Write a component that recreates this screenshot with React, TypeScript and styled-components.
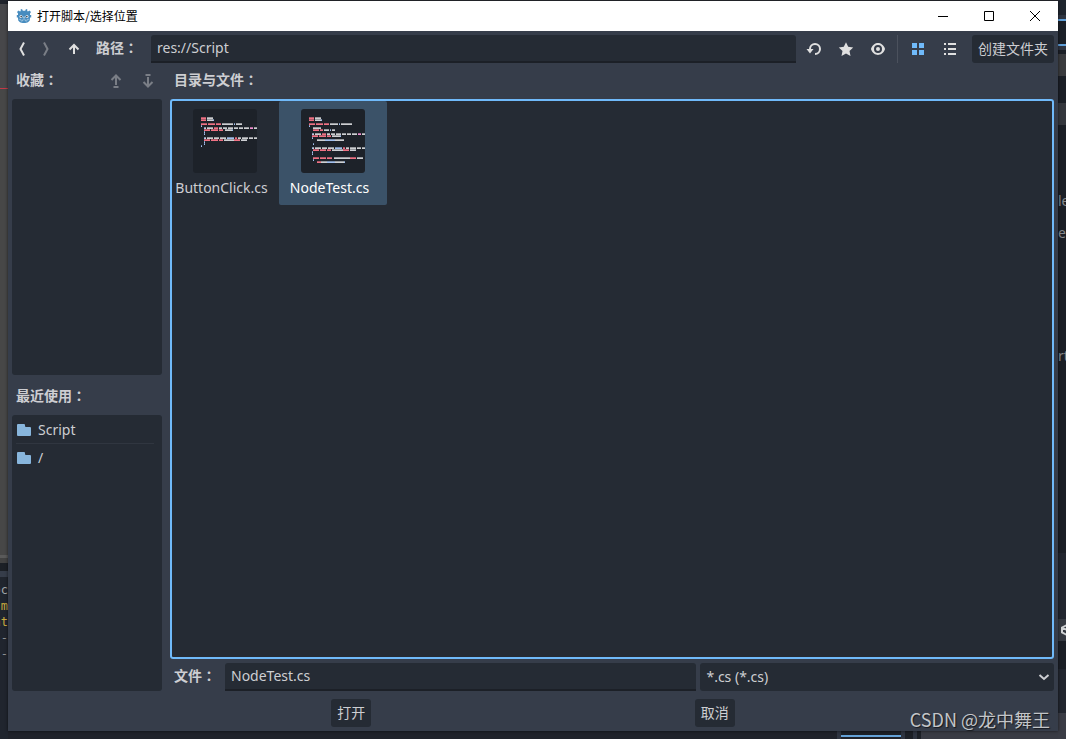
import React, { useState } from 'react';
import styled, { createGlobalStyle, css } from 'styled-components';

const color = {
  base: '#363d4a',
  sunken: '#252b34',
  edge: '#1c2027',
  accent: '#70bafa',
  text: '#cdced2',
  icon: '#e0e0e0',
  folder: '#88b6dd',
  selected: '#3b5268',
};

const GlobalStyle = createGlobalStyle`
  * { box-sizing: border-box; }
  body {
    margin: 0;
    background: #1f232b;
    color: ${color.text};
    font: 14px/20px 'Noto Sans', 'Noto Sans CJK SC', sans-serif;
  }
  button, input, select { font: inherit; color: inherit; }
`;

/* ---------- editor behind the dialog ---------- */

const Desktop = styled.div`
  display: grid;
  grid-template-columns: 8px minmax(0, 1fr) 8px;
  grid-template-rows: 1px minmax(0, 1fr) 8px;
  height: 100vh;
  min-height: 480px;
  overflow: hidden;
`;

const EditorSide = styled.div`
  grid-row: 1 / 4;
  display: flex;
  flex-direction: column;
  overflow: hidden;
`;

const Strip = styled.div<{ $h?: number; $bg: string }>`
  flex: ${(p) => (p.$h ? `0 0 ${p.$h}px` : '1 1 0')};
  background: ${(p) => p.$bg};
  overflow: hidden;
`;

const Console = styled(Strip)`
  display: flex;
  flex-direction: column;
  align-items: flex-end;
  padding-top: 5px;
  font: 12px/16px 'DejaVu Sans Mono', monospace;
`;

const ConsoleLine = styled.span<{ $color: string }>`
  color: ${(p) => p.$color};
  white-space: nowrap;
`;

const SideText = styled(Strip)`
  color: #85888c;
  line-height: 20px;
  display: flex;
  justify-content: flex-start;
`;

const EditorTop = styled.div`
  background: #2a2d33;
`;

const EditorBottom = styled.div`
  grid-column: 2;
  grid-row: 3;
  display: flex;
  background: #1f222a;
  justify-content: flex-end;
`;

const BottomBlock = styled.div<{ $w: number; $bg: string }>`
  width: ${(p) => p.$w}px;
  background: ${(p) => p.$bg};
`;

const BottomTab = styled(BottomBlock)`
  height: 6px;
  border-bottom: 2px solid #64a2d8;
`;

/* ---------- dialog ---------- */

const Dialog = styled.section`
  grid-column: 2;
  grid-row: 2;
  position: relative;
  display: flex;
  flex-direction: column;
  background: ${color.base};
  box-shadow: 0 0 3px rgba(0, 0, 0, 0.6);
`;

const TitleBar = styled.header`
  flex: 0 0 30px;
  display: flex;
  align-items: center;
  padding-left: 8px;
  background: #fff;
  color: #000;
`;

const Title = styled.h1`
  flex: 1;
  margin: 0 0 0 5px;
  font: 400 12px/16px 'Noto Sans CJK SC', sans-serif;
`;

const WindowButton = styled.button`
  width: 46px;
  height: 30px;
  padding: 0;
  border: 0;
  background: none;
  display: flex;
  align-items: center;
  justify-content: center;
`;

const Body = styled.form`
  flex: 1;
  min-height: 0;
  display: flex;
  flex-direction: column;
  gap: 4px;
  padding: 4px;
`;

const Toolbar = styled.div`
  flex: 0 0 28px;
  display: flex;
  align-items: center;
  gap: 4px;
`;

const IconButton = styled.button<{ $w?: number }>`
  flex: none;
  width: ${(p) => p.$w ?? 28}px;
  height: 28px;
  padding: 0;
  border: 0;
  border-radius: 3px;
  background: none;
  color: ${color.icon};
  display: flex;
  align-items: center;
  justify-content: center;
  &:disabled { opacity: 0.4; }
  &[aria-pressed='true'] { color: ${color.accent}; }
`;

const Divider = styled.span`
  width: 1px;
  height: 28px;
  margin: 0 2px 0 1px;
  background: #4b515d;
`;

const labelText = css`
  font-weight: 700;
  white-space: nowrap;
`;

const FieldLabel = styled.label`
  ${labelText}
  flex: 0 0 51px;
  padding: 0 0 4px 4px;
`;

const PathLabel = styled(FieldLabel)`
  flex-basis: 55px;
`;

const Colon = styled.span`
  font-family: 'Noto Sans CJK TC', sans-serif;
`;

const TextInput = styled.input`
  flex: 4 1 0;
  min-width: 0;
  height: 28px;
  padding: 0 6px 2px;
  border: 0;
  border-bottom: 2px solid ${color.edge};
  border-radius: 3px 3px 0 0;
  outline: 0;
  background: ${color.sunken};
`;

const PushButton = styled.button`
  flex: none;
  height: 28px;
  padding: 0 6px;
  border: 0;
  border-radius: 3px;
  background: ${color.sunken};
  white-space: nowrap;
`;

const NewFolderButton = styled(PushButton)`
  margin-left: 4px;
`;

const Columns = styled.div`
  flex: 1;
  min-height: 0;
  display: flex;
  gap: 8px;
`;

const Sidebar = styled.aside`
  flex: 0 0 150px;
  display: flex;
  flex-direction: column;
  gap: 4px;
`;

const Main = styled.main`
  flex: 1;
  min-width: 0;
  display: flex;
  flex-direction: column;
  gap: 4px;
`;

const SectionTitle = styled.h2`
  ${labelText}
  flex: 1;
  margin: 0;
  padding: 0 0 4px 4px;
  font-size: 14px;
  line-height: 20px;
`;

const SectionHead = styled.div<{ $tall?: boolean }>`
  flex: 0 0 ${(p) => (p.$tall ? 32 : 28)}px;
  display: flex;
  align-items: center;
  gap: 4px;
  ${SectionTitle} { padding-bottom: ${(p) => (p.$tall ? 0 : 4)}px; }
`;

const List = styled.ul`
  flex: 1 1 0;
  min-height: 0;
  margin: 0;
  padding: 1px 8px 0 4px;
  border-radius: 3px;
  background: ${color.sunken};
  list-style: none;
  overflow: auto;
`;

const RecentItem = styled.li`
  &:not(:last-child) { border-bottom: 1px solid #303640; }
`;

const RecentButton = styled.button`
  display: flex;
  align-items: center;
  gap: 6px;
  width: 100%;
  height: 27px;
  padding: 0;
  border: 0;
  background: none;
  text-align: left;
`;

const FileGrid = styled.div`
  flex: 1;
  min-height: 0;
  display: flex;
  flex-wrap: wrap;
  align-content: flex-start;
  padding: 2px 1px;
  border-radius: 3px;
  background: ${color.sunken};
  box-shadow: inset 0 0 0 2px ${color.accent};
`;

const FileItem = styled.button`
  width: 108px;
  height: 104px;
  padding: 8px 0 0;
  border: 0;
  border-radius: 2px;
  background: none;
  display: flex;
  flex-direction: column;
  align-items: center;
  gap: 5px;
  &[aria-pressed='true'] { background: ${color.selected}; color: #fff; }
`;

const FileName = styled.span`
  width: 100px;
  margin-right: 7px;
  text-align: center;
`;

const SelectWrap = styled.div`
  flex: 3 1 9px;
  min-width: 0;
  display: grid;
  align-items: center;
  > * { grid-area: 1 / 1; }
  > svg { justify-self: end; margin-right: 2px; pointer-events: none; }
`;

const FilterSelect = styled.select`
  appearance: none;
  width: 100%;
  height: 28px;
  padding: 0 24px 0 6px;
  border: 0;
  border-radius: 3px;
  background: ${color.sunken};
`;

const Actions = styled.footer`
  flex: 0 0 28px;
  margin-top: 4px;
  display: flex;
  justify-content: space-evenly;
  gap: 4px;
`;

const Watermark = styled.span`
  position: absolute;
  right: 8px;
  bottom: 0;
  font: 400 18px/24px 'Noto Sans CJK SC', sans-serif;
  color: #c3c5c8;
  text-shadow: 1px 1px 1px rgba(0, 0, 0, 0.6);
  pointer-events: none;
`;

/* ---------- icons ---------- */

const Icon = ({ children }: { children: React.ReactNode }) => (
  <svg width="16" height="16" viewBox="0 0 16 16" fill="currentColor" aria-hidden="true">
    {children}
  </svg>
);

const line = { fill: 'none', stroke: 'currentColor', strokeWidth: 2 } as const;

const GodotLogo = () => (
  <svg width="16" height="16" viewBox="0 0 16 16" aria-hidden="true">
    <path
      fill="#478cbf"
      d="M6 1 4.600 1.400 4.800 3 4 3.500 2.600 2.400 1 4l1 1.600V7H.8v2.500H2V11c0 2.500 2.500 4 6 4s6-1.500 6-4V9.500h1.200V7H14V5.600L15 4l-1.600-1.600L12 3.500 11.200 3l.2-1.600L10 1l-.8 1.700H6.800z"
    />
    <circle cx="5" cy="8.500" r="1.500" fill="#e6eff6" />
    <circle cx="11" cy="8.500" r="1.500" fill="#e6eff6" />
    <circle cx="5.200" cy="8.600" r=".8" fill="#414042" />
    <circle cx="10.800" cy="8.600" r=".8" fill="#414042" />
    <path stroke="#e6eff6" strokeWidth="1" d="M8 8.500v2" />
    <path stroke="#a9cbe4" strokeWidth=".7" fill="none" d="M2.500 11.200 5 11.500V13h1.500v-1.200h3V13H11v-1.500l2.500-.3" />
  </svg>
);

const Folder = () => (
  <svg width="16" height="16" viewBox="0 0 16 16" fill={color.folder} aria-hidden="true">
    <path d="M1 3a1 1 0 0 1 1-1h6a1 1 0 0 1 1 1v1a1 1 0 0 0 1 1h4a1 1 0 0 1 1 1v7a1 1 0 0 1-1 1H2a1 1 0 0 1-1-1z" />
  </svg>
);

/* ---------- script thumbnails ---------- */

type Run = [x: number, end: number, kind: 'r' | 'w' | 'b' | 'p'];
type CodeLine = [y: number, runs: Run[]];

const ink = { r: '#f07284', w: '#cdcfd2', b: '#a3c0ee', p: '#f08fd0' };

const using: CodeLine[] = [
  [8, [[8, 13, 'r'], [14, 20, 'w']]],
  [10, [[8, 13, 'r'], [14, 20, 'w'], [20, 21, 'b']]],
];
const readySignature: Run[] = [
  [11, 12, 'b'], [12, 13, 'w'], [14, 20, 'w'], [21, 25, 'r'], [26, 29, 'w'], [30, 34, 'w'], [35, 40, 'w'],
  [41, 45, 'w'], [46, 50, 'w'], [51, 56, 'w'], [57, 60, 'p'], [61, 64, 'w'],
];
const processSignature: Run[] = [
  [11, 12, 'b'], [12, 13, 'w'], [14, 20, 'w'], [21, 26, 'w'], [27, 33, 'w'], [34, 41, 'b'], [42, 44, 'r'],
  [45, 48, 'w'], [49, 55, 'w'], [56, 60, 'w'], [61, 64, 'w'],
];

const buttonClickCode: CodeLine[] = [
  ...using,
  [14, [[8, 14, 'r'], [15, 22, 'r'], [23, 28, 'r'], [29, 40, 'w'], [41, 42, 'b'], [43, 49, 'w']]],
  [16, [[8, 9, 'b']]],
  [18, readySignature],
  [20, [[11, 17, 'r'], [18, 25, 'r'], [26, 30, 'r'], [32, 39, 'w'], [39, 40, 'b']]],
  [22, [[11, 12, 'b']]],
  [24, [[11, 12, 'b']]],
  [28, processSignature],
  [30, [[11, 17, 'r'], [18, 25, 'r'], [26, 30, 'r'], [31, 41, 'w'], [41, 47, 'r'], [48, 54, 'w']]],
  [32, [[11, 12, 'b']]],
  [34, [[11, 12, 'b']]],
  [36, [[8, 9, 'b']]],
];

const nodeTestCode: CodeLine[] = [
  ...using,
  [14, [[8, 14, 'r'], [15, 22, 'r'], [23, 28, 'r'], [29, 37, 'w'], [38, 39, 'b'], [40, 51, 'w']]],
  [16, [[8, 9, 'b']]],
  [18, [[12, 20, 'w']]],
  [20, [[12, 18, 'r'], [19, 22, 'r'], [23, 28, 'w'], [29, 30, 'b'], [31, 34, 'w']]],
  [24, readySignature],
  [26, [[11, 17, 'r'], [18, 25, 'r'], [26, 30, 'r'], [31, 39, 'w'], [39, 40, 'b']]],
  [28, [[11, 12, 'b']]],
  [30, [[16, 24, 'w'], [24, 34, 'b'], [34, 43, 'w']]],
  [34, [[12, 13, 'b']]],
  [38, processSignature],
  [40, [[12, 18, 'r'], [19, 25, 'r'], [26, 30, 'r'], [31, 42, 'w'], [42, 48, 'r'], [49, 55, 'w']]],
  [42, [[11, 12, 'b']]],
  [44, [[11, 12, 'b']]],
  [48, [[12, 18, 'r'], [19, 25, 'r'], [26, 31, 'r'], [33, 49, 'w'], [49, 55, 'r'], [56, 62, 'w']]],
  [50, [[12, 13, 'b']]],
  [52, [[16, 20, 'r'], [20, 26, 'w'], [26, 34, 'b'], [34, 43, 'w'], [43, 44, 'b']]],
];

const Thumbnail = ({ code }: { code: CodeLine[] }) => (
  <svg width="64" height="64" viewBox="0 0 64 64" shapeRendering="crispEdges" aria-hidden="true">
    <rect width="64" height="64" rx="3" fill="#1d2229" shapeRendering="auto" />
    {code.map(([y, runs]) =>
      runs.map(([x, end, kind]) => (
        <g key={`${x}-${y}`} fill={ink[kind]}>
          <rect x={x} y={y} width={end - x} height="1" opacity="0.7" />
          <rect x={x} y={y + 1} width={end - x} height="1" />
        </g>
      )),
    )}
  </svg>
);

const files = [
  { name: 'ButtonClick.cs', code: buttonClickCode },
  { name: 'NodeTest.cs', code: nodeTestCode },
];

const recent = ['Script', '/'];

export default function App() {
  const [path, setPath] = useState('res://Script');
  const [file, setFile] = useState('NodeTest.cs');
  const [view, setView] = useState<'grid' | 'list'>('grid');

  return (
    <>
      <GlobalStyle />
      <Desktop>
        <EditorSide aria-hidden="true">
          <Strip $h={4} $bg="#20242c" />
          <Strip $h={84} $bg="#47474a" />
          <Strip $h={1} $bg="#c23a48" />
          <Strip $bg="#474747" />
          <Strip $h={3} $bg="#5a5a5a" />
          <Strip $h={5} $bg="#424242" />
          <Strip $h={8} $bg="#1c2026" />
          <Strip $h={6} $bg="#363d4a" />
          <Console $h={162} $bg="#20252e">
            <ConsoleLine $color="#a5a7aa">oc</ConsoleLine>
            <ConsoleLine $color="#c7a93f">m</ConsoleLine>
            <ConsoleLine $color="#c7a93f">at</ConsoleLine>
            <ConsoleLine $color="#8c8f93">--</ConsoleLine>
            <ConsoleLine $color="#8c8f93">--</ConsoleLine>
          </Console>
        </EditorSide>

        <EditorTop />

        <Dialog role="dialog" aria-labelledby="dialog-title">
          <TitleBar>
            <GodotLogo />
            <Title id="dialog-title">打开脚本/选择位置</Title>
            <WindowButton type="button" aria-label="最小化">
              <svg width="10" height="10"><path d="M0 5.500h10" stroke="#000" /></svg>
            </WindowButton>
            <WindowButton type="button" aria-label="最大化">
              <svg width="10" height="10"><path d="M.5.5h9v9h-9z" fill="none" stroke="#000" /></svg>
            </WindowButton>
            <WindowButton type="button" aria-label="关闭">
              <svg width="10" height="10"><path d="m0 0 10 10M10 0 0 10" stroke="#000" /></svg>
            </WindowButton>
          </TitleBar>

          <Body onSubmit={(e) => e.preventDefault()}>
            <Toolbar>
              <IconButton type="button" $w={20} aria-label="后退">
                <Icon><path {...line} d="M10 1.500 6.500 8l3.500 6.500" /></Icon>
              </IconButton>
              <IconButton type="button" $w={20} aria-label="前进" disabled>
                <Icon><path {...line} d="M6 1.500 9.500 8 6 14.500" /></Icon>
              </IconButton>
              <IconButton type="button" aria-label="上一级">
                <Icon><path {...line} d="M8 13V4.500M3.500 8.500 8 4l4.500 4.500" /></Icon>
              </IconButton>
              <PathLabel htmlFor="path">路径<Colon>：</Colon></PathLabel>
              <TextInput id="path" value={path} onChange={(e) => setPath(e.target.value)} />
              <IconButton type="button" aria-label="刷新">
                <Icon><path d="M9 2a6 6 0 0 0-6 6H.5L4 12.500 7.500 8H5a4 4 0 1 1 4 4v2A6 6 0 0 0 9 2z" /></Icon>
              </IconButton>
              <IconButton type="button" aria-label="收藏">
                <Icon><path d="m8 1.200 2.200 4.600 5 .6-3.700 3.500 1 5L8 12.500l-4.500 2.400 1-5L.8 6.400l5-.6z" /></Icon>
              </IconButton>
              <IconButton type="button" aria-label="显示隐藏文件">
                <Icon>
                  <path
                    fillRule="evenodd"
                    d="M8 2C5.440 2 2.210 3.950 1.040 7.700a1 1 0 0 0 0 .59C2.180 12.110 5.460 14 8 14s5.820-1.890 6.960-5.710a1 1 0 0 0 0-.58C13.830 3.910 10.560 2 8 2zm0 2a4 4 0 0 1 0 8 4 4 0 0 1 0-8zm0 2a2 2 0 0 0 0 4 2 2 0 0 0 0-4z"
                  />
                </Icon>
              </IconButton>
              <Divider />
              <IconButton type="button" aria-label="缩略图" aria-pressed={view === 'grid'} onClick={() => setView('grid')}>
                <Icon><path d="M2 2h5v5H2zM9 2h5v5H9zM2 9h5v5H2zM9 9h5v5H9z" /></Icon>
              </IconButton>
              <IconButton type="button" aria-label="列表" aria-pressed={view === 'list'} onClick={() => setView('list')}>
                <Icon><path d="M2 2h2v2H2zM6 2h8v2H6zM2 7h2v2H2zM6 7h8v2H6zM2 12h2v2H2zM6 12h8v2H6z" /></Icon>
              </IconButton>
              <NewFolderButton type="button">创建文件夹</NewFolderButton>
            </Toolbar>

            <Columns>
              <Sidebar>
                <SectionHead>
                  <SectionTitle>收藏<Colon>：</Colon></SectionTitle>
                  <IconButton type="button" aria-label="上移" disabled>
                    <Icon><path {...line} d="M8 12V3M3.500 7 8 2.500 12.500 7M5.500 14h5" /></Icon>
                  </IconButton>
                  <IconButton type="button" aria-label="下移" disabled>
                    <Icon><path {...line} d="M8 4v9M3.500 9 8 13.500 12.500 9M5.500 2h5" /></Icon>
                  </IconButton>
                </SectionHead>
                <List aria-label="收藏" />
                <SectionHead $tall>
                  <SectionTitle>最近使用<Colon>：</Colon></SectionTitle>
                </SectionHead>
                <List aria-label="最近使用">
                  {recent.map((name) => (
                    <RecentItem key={name}>
                      <RecentButton type="button"><Folder />{name}</RecentButton>
                    </RecentItem>
                  ))}
                </List>
              </Sidebar>

              <Main>
                <SectionHead>
                  <SectionTitle>目录与文件<Colon>：</Colon></SectionTitle>
                </SectionHead>
                <FileGrid>
                  {files.map(({ name, code }) => (
                    <FileItem key={name} type="button" aria-pressed={name === file} onClick={() => setFile(name)}>
                      <Thumbnail code={code} />
                      <FileName>{name}</FileName>
                    </FileItem>
                  ))}
                </FileGrid>
                <Toolbar>
                  <FieldLabel htmlFor="file">文件<Colon>：</Colon></FieldLabel>
                  <TextInput id="file" value={file} onChange={(e) => setFile(e.target.value)} />
                  <SelectWrap>
                    <FilterSelect aria-label="文件类型">
                      <option>*.cs (*.cs)</option>
                    </FilterSelect>
                    <Icon><path {...line} stroke="#cdced2" d="m3.500 6 4.500 4 4.500-4" /></Icon>
                  </SelectWrap>
                </Toolbar>
              </Main>
            </Columns>

            <Actions>
              <PushButton type="submit">打开</PushButton>
              <PushButton type="button">取消</PushButton>
            </Actions>
          </Body>
          <Watermark>CSDN @龙中舞王</Watermark>
        </Dialog>

        <EditorBottom aria-hidden="true">
          <BottomBlock $w={4} $bg="#2e3440" />
          <BottomTab $w={60} $bg="#1c2027" />
          <BottomBlock $w={4} $bg="#2e3440" />
          <BottomBlock $w={8} $bg="#1c2027" />
          <BottomBlock $w={4} $bg="#2e3440" />
          <BottomBlock $w={4} $bg="#1c2027" />
          <BottomBlock $w={137} $bg="#393b44" />
        </EditorBottom>

        <EditorSide aria-hidden="true">
          <Strip $h={15} $bg="#1f252e" />
          <Strip $h={4} $bg="#2f3541" />
          <Strip $h={2} $bg="#5f9fd8" />
          <Strip $h={23} $bg="#1b2028" />
          <Strip $h={2} $bg="#5f9fd8" />
          <Strip $h={4} $bg="#2f3541" />
          <Strip $h={4} $bg="#1b1f26" />
          <Strip $h={22} $bg="#3a3b3e" />
          <Strip $h={27} $bg="#1b1f26" />
          <Strip $h={22} $bg="#34373d" />
          <Strip $h={66} $bg="#1b1f26" />
          <SideText $h={32} $bg="#1b1f26">le</SideText>
          <SideText $h={123} $bg="#1b1f26">er</SideText>
          <SideText $h={207} $bg="#1b1f26">rt</SideText>
          <Strip $h={66} $bg="#22262f" />
          <Strip $h={22} $bg="#363a42">
            <svg width="16" height="22" viewBox="0 0 16 22">
              <path fill="none" stroke="#d0d2d4" strokeWidth="2" d="M9 6 4 8.500v5L9 16l5-2.500v-5zM4 8.500 9 11l5-2.500M9 11v5" />
            </svg>
          </Strip>
          <Strip $h={28} $bg="#1b1f26" />
          <Strip $h={44} $bg="#22262f" />
          <Strip $bg="#3a3c45" />
        </EditorSide>
      </Desktop>
    </>
  );
}
